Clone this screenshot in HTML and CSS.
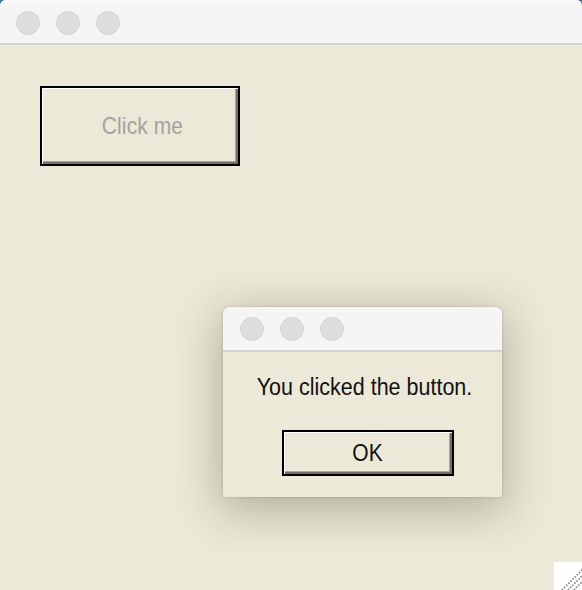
FILE: index.html
```html
<!DOCTYPE html>
<html>
<head>
<meta charset="utf-8">
<link rel="stylesheet" href="styles.css">
</head>
<body>
<div class="window">
  <div class="titlebar">
    <span class="dot"></span><span class="dot"></span><span class="dot"></span>
  </div>
  <div class="content">
    <button class="btn btn-main"><span class="label">Click me</span></button>
  </div>
  <div class="grip">
    <svg width="28" height="28" viewBox="0 0 28 28">
      <rect width="28" height="28" fill="#ffffff"/>
      <g stroke="#8c8c8c" stroke-width="2" stroke-dasharray="1.5 1.5">
        <line x1="8" y1="28" x2="28" y2="8"/>
        <line x1="14" y1="28" x2="28" y2="14"/>
        <line x1="20" y1="28" x2="28" y2="20"/>
      </g>
    </svg>
  </div>
</div>
<div class="dialog">
  <div class="titlebar dialog-title">
    <span class="dot"></span><span class="dot"></span><span class="dot"></span>
  </div>
  <div class="dialog-body">
    <div class="message"><span class="label">You clicked the button.</span></div>
    <button class="btn btn-ok"><span class="label">OK</span></button>
  </div>
</div>
</body>
</html>
```
FILE: styles.css
```css
html, body {
  margin: 0;
  padding: 0;
  background: #3d7a96;
  width: 582px;
  height: 590px;
  overflow: hidden;
  font-family: "Liberation Sans", Arial, sans-serif;
}
.window {
  position: relative;
  width: 582px;
  height: 590px;
  background: #ece9d9;
  border-radius: 6px 6px 0 0;
  overflow: hidden;
  display: flex;
  flex-direction: column;
}
.titlebar {
  height: 43px;
  background: #f5f5f5;
  border-bottom: 2px solid #d2d2d2;
  display: flex;
  align-items: center;
  gap: 16px;
  padding-left: 16px;
  box-sizing: content-box;
  flex-shrink: 0;
}
.window > .titlebar {
  border-top: 3px solid #fbfbfb;
  height: 40px;
}
.dot {
  width: 22px;
  height: 22px;
  border-radius: 50%;
  background: #dddddd;
  border: 1px solid #d4d4d4;
}
.content {
  padding: 41px 0 0 40px;
  flex: 1;
}
.label {
  display: inline-block;
  transform: scaleY(1.12);
}
.btn {
  box-sizing: border-box;
  background: #ece9d9;
  border: 2px solid #000;
  box-shadow: inset 1px 1px 0 #ffffff, inset -2px -2px 0 #716f64, inset -3px -3px 0 #aca899;
  font-family: "Liberation Sans", Arial, sans-serif;
  font-size: 21px;
  padding: 0;
  display: flex;
  align-items: center;
  justify-content: center;
}
.btn-main {
  width: 200px;
  height: 80px;
  color: #a3a3a0;
  padding-left: 5px;
  letter-spacing: 0.1px;
}
.grip {
  position: absolute;
  right: 0;
  bottom: 0;
  width: 28px;
  height: 28px;
}
.grip svg { display: block; }
.dialog {
  position: absolute;
  left: 223px;
  top: 307px;
  width: 279px;
  height: 190px;
  background: #ece9d9;
  border-radius: 7px 7px 0 0;
  overflow: hidden;
  box-shadow: 0 10px 45px 4px rgba(60, 55, 30, 0.32), 0 0 3px rgba(0,0,0,0.18);
}
.dialog-title {
  padding-left: 17px;
}
.dialog-body {
  display: flex;
  flex-direction: column;
  align-items: center;
  padding-top: 23px;
}
.message {
  font-size: 21.5px;
  line-height: 24px;
  color: #111;
  margin-left: 4px;
}
.btn-ok {
  margin-top: 31px;
  margin-left: 10px;
  width: 172px;
  height: 46px;
  color: #111;
}
```
